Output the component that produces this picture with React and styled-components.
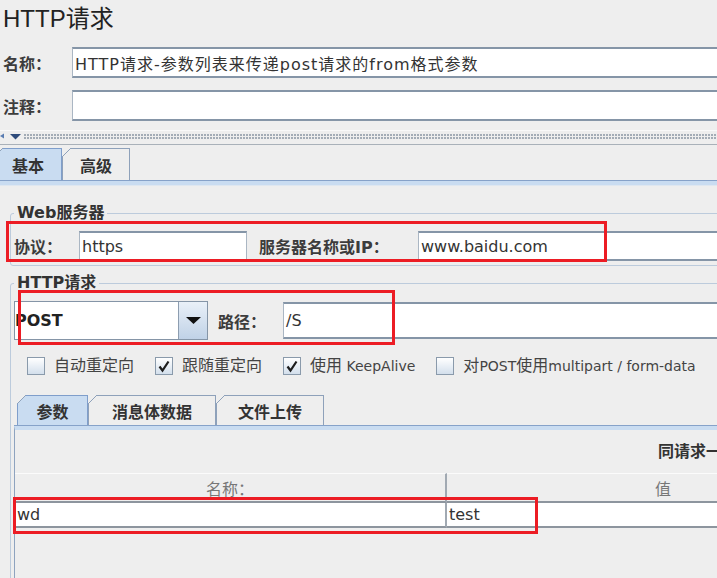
import React from 'react';
import styled, { createGlobalStyle } from 'styled-components';

const GlobalStyle = createGlobalStyle`
  html, body {
    margin: 0;
    padding: 0;
    background: #eeeeee;
    overflow: hidden;
  }
  body {
    font-family: "DejaVu Sans", "Noto Sans CJK SC", sans-serif;
    color: #333;
  }
`;

const Page = styled.div`
  width: 740px;
  height: 578px;
  overflow: hidden;
`;

const Title = styled.h1`
  margin: 0;
  height: 40px;
  box-sizing: border-box;
  padding: 3px 0 0 3px;
  font: 400 24px/32px "Liberation Sans", "Noto Sans CJK SC", sans-serif;
  color: #222;
`;

const MetaRow = styled.div`
  display: flex;
  align-items: center;
  margin-top: ${p => p.$mt}px;
  padding-left: 3px;
`;

const Row = styled.div`
  position: relative;
  display: flex;
  align-items: center;
`;

const Label = styled.span`
  flex: none;
  width: ${p => p.$w}px;
  margin-left: ${p => p.$ml || 0}px;
  font-size: 16px;
  font-weight: 700;
  color: #3c3c3c;
  white-space: nowrap;
`;

const Field = styled.div`
  box-sizing: border-box;
  height: ${p => p.$h || 31}px;
  ${p => (p.$w ? `width: ${p.$w}px; flex: none;` : 'flex: 1;')}
  display: flex;
  align-items: center;
  padding: 0 2px;
  background: #fff;
  border: 1px solid #aab6c3;
  border-top: 2px solid #8595a7;
  border-bottom: 2px solid #8595a7;
  font-size: 16px;
  letter-spacing: ${p => p.$spacing || 0}px;
  color: #333;
  white-space: nowrap;
  overflow: hidden;
`;

const Splitter = styled.div`
  display: flex;
  align-items: flex-start;
  margin-top: 9px;
  height: 15px;
  box-sizing: border-box;
  padding-top: 2px;
  border-top: 1px solid #f9f9f9;
  border-bottom: 1px solid #a9b1b9;
`;

const Dots = styled.div`
  flex: 1;
  height: 6px;
  margin-top: 1px;
  background-image: radial-gradient(circle at 1px 1px, #a3acb6 0.8px, transparent 1.3px);
  background-size: 3px 3px;
`;

const TabStrip = styled.div`
  display: flex;
  align-items: flex-end;
  margin-top: ${p => p.$mt || 0}px;
  padding-left: ${p => p.$pl || 0}px;
  border-bottom: 1px solid #86a2c9;
  & > :first-child {
    margin-left: ${p => p.$start || 0}px;
  }
`;

const Tab = styled.div`
  position: relative;
  box-sizing: border-box;
  flex: none;
  width: ${p => p.$w}px;
  height: ${p => p.$h}px;
  display: flex;
  align-items: center;
  justify-content: center;
  border: 1px solid ${p => (p.$active ? '#7f9ecb' : '#8ea1ba')};
  border-bottom: none;
  background: ${p => (p.$active ? '#c9dcf1' : '#eeeeee')};
  font-size: 16px;
  font-weight: 700;
  color: #333;
  &::before {
    content: '';
    position: absolute;
    top: -1px;
    left: -1px;
    width: 9px;
    height: 9px;
    background: linear-gradient(
      to bottom right,
      #eeeeee calc(50% - 0.6px),
      #8ea1ba calc(50% - 0.6px),
      #8ea1ba calc(50% + 0.6px),
      transparent calc(50% + 0.6px)
    );
  }
`;

const TabBand = styled.div`
  height: 4px;
  background: #c9dcf1;
  border-bottom: 1px solid #dfe7f0;
`;

const Group = styled.fieldset`
  margin: ${p => p.$mt}px 0 0 10px;
  padding: 8px 3px 4px 3px;
  min-width: 0;
  border: 1px solid #bccbdc;
  border-radius: 3px;
`;

const Legend = styled.legend`
  padding: 0 3px;
  font-size: 16px;
  font-weight: 700;
  line-height: 20px;
  color: #333;
`;

const Highlight = styled.div`
  position: absolute;
  top: ${p => p.$top}px;
  left: ${p => p.$left}px;
  width: ${p => p.$w}px;
  height: ${p => p.$h}px;
  box-sizing: border-box;
  border: 3px solid #ec1c24;
  pointer-events: none;
`;

const Combo = styled.div`
  flex: none;
  display: flex;
  width: 194px;
  height: 39px;
  box-sizing: border-box;
  border: 1px solid #8595a7;
  background: #fff;
`;

const ComboText = styled.span`
  flex: 1;
  display: flex;
  align-items: center;
  font-size: 16px;
  font-weight: 700;
  color: #222;
`;

const ComboButton = styled.div`
  width: 28px;
  display: flex;
  align-items: center;
  justify-content: center;
  border-left: 1px solid #8d9db0;
  background: linear-gradient(#e9f0f8, #c0d2e7);
`;

const CheckRow = styled.div`
  display: flex;
  align-items: center;
  gap: 21px;
  height: 18px;
  margin-top: 17px;
  padding-left: 13px;
`;

const CheckItem = styled.span`
  display: flex;
  align-items: center;
  gap: 9px;
  height: 18px;
  font-size: 14px;
  line-height: 18px;
  color: #444;
  white-space: nowrap;
`;

const Han = styled.span`
  font-size: 16px;
  line-height: 18px;
`;

const Box = styled.span`
  width: 18px;
  height: 18px;
  box-sizing: border-box;
  display: flex;
  align-items: center;
  justify-content: center;
  border: 1px solid #8a9aab;
  background: linear-gradient(#ffffff, #d3dfec);
`;

const Pane = styled.div`
  height: 200px;
  border-left: 1px solid #8ea3bf;
  border-top: 4px solid #c9dcf1;
`;

const Caption = styled.div`
  margin: 12px 0 0 643px;
  font-size: 16px;
  line-height: 20px;
  font-weight: 700;
  color: #333;
  white-space: nowrap;
`;

const Table = styled.div`
  display: grid;
  grid-template-columns: 432px 432px;
  margin-top: 11px;
`;

const HeadCell = styled.div`
  height: 30px;
  box-sizing: border-box;
  display: flex;
  align-items: center;
  justify-content: center;
  border-top: 1px solid #fbfbfb;
  border-bottom: 2px solid #8d959e;
  ${p => p.$divider && 'border-right: 2px solid #a1a9b2;'}
  font-size: 16px;
  color: #777;
`;

const DataRow = styled.div`
  position: relative;
  grid-column: 1 / -1;
  display: grid;
  grid-template-columns: 432px 432px;
`;

const Cell = styled.div`
  height: 25px;
  box-sizing: border-box;
  display: flex;
  align-items: center;
  padding-left: 2px;
  background: #fff;
  border-bottom: 2px solid #8d959e;
  ${p => p.$divider && 'border-right: 2px solid #a1a9b2;'}
  font-size: 16px;
  color: #333;
`;

const SplitArrows = () => (
  <svg width="24" height="8" viewBox="0 0 24 8" style={{ flex: 'none' }}>
    <path d="M0 3 L4 0.5 L4 5.5 Z" fill="#5a7db2" />
    <path d="M10 1 L21 1 L15.5 6.5 Z" fill="#2f4c7c" />
  </svg>
);

const Caret = () => (
  <svg width="15" height="7" viewBox="0 0 15 7">
    <path d="M0 0 H15 L7.5 7 Z" fill="#111" />
  </svg>
);

const Check = ({ on }) => (
  <Box>
    {on && (
      <svg width="14" height="14" viewBox="0 0 14 14">
        <path d="M2.5 7.5 L5.5 11.5 L11.5 2.5" fill="none" stroke="#1d1d1d" strokeWidth="2.2" />
      </svg>
    )}
  </Box>
);

export default function App() {
  return (
    <Page>
      <GlobalStyle />
      <Title>HTTP请求</Title>

      <MetaRow $mt={7}>
        <Label $w={69}>名称：</Label>
        <Field $spacing={1}>HTTP请求-参数列表来传递post请求的from格式参数</Field>
      </MetaRow>
      <MetaRow $mt={12}>
        <Label $w={69}>注释：</Label>
        <Field />
      </MetaRow>

      <Splitter>
        <SplitArrows />
        <Dots />
      </Splitter>

      <TabStrip $mt={3} $start={-6}>
        <Tab $w={68} $h={32} $active>基本</Tab>
        <Tab $w={68} $h={32}>高级</Tab>
      </TabStrip>
      <TabBand />

      <Group $mt={17}>
        <Legend>Web服务器</Legend>
        <Row>
          <Label $w={65}>协议：</Label>
          <Field $w={168} $h={30}>https</Field>
          <Label $w={159} $ml={12}>服务器名称或IP：</Label>
          <Field $h={30}>www.baidu.com</Field>
          <Highlight $top={-10} $left={-8} $w={601} $h={41} />
        </Row>
      </Group>

      <Group $mt={7}>
        <Legend>HTTP请求</Legend>
        <Row>
          <Combo>
            <ComboText>POST</ComboText>
            <ComboButton>
              <Caret />
            </ComboButton>
          </Combo>
          <Label $w={65} $ml={10}>路径：</Label>
          <Field $h={37}>/S</Field>
          <Highlight $top={-11} $left={4} $w={377} $h={55} />
        </Row>

        <CheckRow>
          <CheckItem><Check /><Han>自动重定向</Han></CheckItem>
          <CheckItem><Check on /><Han>跟随重定向</Han></CheckItem>
          <CheckItem><Check on /><span><Han>使用</Han> KeepAlive</span></CheckItem>
          <CheckItem><Check /><span><Han>对</Han>POST<Han>使用</Han>multipart / form-data</span></CheckItem>
        </CheckRow>

        <TabStrip $mt={20} $pl={3}>
          <Tab $w={71} $h={30} $active>参数</Tab>
          <Tab $w={128} $h={30}>消息体数据</Tab>
          <Tab $w={108} $h={30}>文件上传</Tab>
        </TabStrip>
        <Pane>
          <Caption>同请求一起发送参数：</Caption>
          <Table>
            <HeadCell $divider>名称：</HeadCell>
            <HeadCell>值</HeadCell>
            <DataRow>
              <Cell $divider>wd</Cell>
              <Cell>test</Cell>
              <Highlight $top={-6} $left={-2} $w={525} $h={37} />
            </DataRow>
          </Table>
        </Pane>
      </Group>
    </Page>
  );
}
